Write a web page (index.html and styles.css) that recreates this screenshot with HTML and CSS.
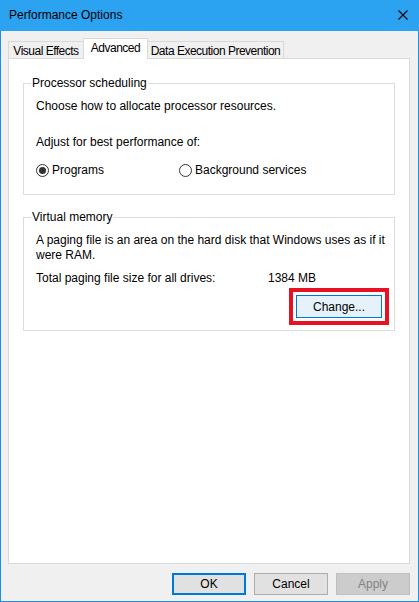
FILE: index.html
```html
<!DOCTYPE html>
<html>
<head>
<meta charset="utf-8">
<link rel="stylesheet" href="styles.css">
</head>
<body>
<div class="window">
  <div class="titlebar">
    <span class="title">Performance Options</span>
    <svg class="close" width="10" height="10" viewBox="0 0 10 10"><path d="M0.5 0.5 L9.5 9.5 M9.5 0.5 L0.5 9.5" stroke="#000" stroke-width="1.1" fill="none"/></svg>
  </div>
  <div class="client">
    <div class="tabs">
      <div class="tab tab-ve">Visual Effects</div>
      <div class="tab active">Advanced</div>
      <div class="tab tab-dep">Data Execution Prevention</div>
    </div>
    <div class="panel">
      <fieldset class="group group-proc">
        <legend>Processor scheduling</legend>
        <div class="line">Choose how to allocate processor resources.</div>
        <div class="line adjust">Adjust for best performance of:</div>
        <div class="radios">
          <label class="radio r1"><span class="dot checked"></span>Programs</label>
          <label class="radio"><span class="dot"></span>Background services</label>
        </div>
      </fieldset>
      <fieldset class="group group-vm">
        <legend>Virtual memory</legend>
        <div class="line">A paging file is an area on the hard disk that Windows uses as if it<br>were RAM.</div>
        <div class="total"><span class="total-label">Total paging file size for all drives:</span><span>1384 MB</span></div>
        <div class="change-row"><button class="btn change">Change...</button></div>
      </fieldset>
    </div>
    <div class="buttons">
      <button class="btn default">OK</button>
      <button class="btn">Cancel</button>
      <button class="btn disabled">Apply</button>
    </div>
  </div>
</div>
</body>
</html>
```

FILE: styles.css
```css
* { box-sizing: border-box; }
html, body { margin: 0; padding: 0; }
body {
  width: 419px;
  height: 602px;
  font-family: "Liberation Sans", Arial, sans-serif;
  font-size: 12px;
  line-height: 15px;
  color: #000;
  background: #f0f0f0;
  white-space: nowrap;
}
.window {
  width: 419px;
  height: 602px;
  display: flex;
  flex-direction: column;
}
.titlebar {
  height: 31px;
  background: #2ba3f1;
  display: flex;
  align-items: center;
  justify-content: space-between;
  padding: 0 11px 1px 9px;
  flex: none;
}
.title { font-size: 12px; }
.close { display: block; }
.client {
  flex: 1;
  border: 1px solid #1b8fe6;
  border-top: none;
  background: #f0f0f0;
  padding: 7px 8px 0 7px;
  display: flex;
  flex-direction: column;
}
.tabs {
  display: flex;
  align-items: flex-end;
  height: 20px;
  position: relative;
  z-index: 1;
}
.tab {
  height: 17px;
  border: 1px solid #d9d9d9;
  border-bottom: none;
  background: #f0f0f0;
  padding: 1px 0 0 0;
  line-height: 16px;
  text-align: center;
  letter-spacing: -0.5px;
}
.tab-ve { width: 76px; }
.tab.active {
  height: 21px;
  margin-bottom: -1px;
  background: #fff;
  width: 65px;
  margin-left: -1px;
  margin-right: -1px;
}
.tab-dep { width: 137px; }
.panel {
  width: 402px;
  height: 506px;
  background: #fff;
  border: 1px solid #d9d9d9;
  padding: 17px 14px 0 14px;
}
.group {
  margin: 0;
  border: 1px solid #dcdcdc;
  padding: 0 12px;
  min-width: 0;
}
.group legend {
  padding: 0 1px;
  margin-left: -5px;
  line-height: 15px;
}
.group-proc { padding-top: 8px; padding-bottom: 16px; }
.group-vm { margin-top: 15px; padding-top: 8px; padding-bottom: 12px; }
.line { line-height: 15px; }
.adjust { margin-top: 21px; }
.radios { display: flex; margin-top: 13px; align-items: center; }
.radio { display: flex; align-items: center; }
.r1 { width: 143px; }
.dot {
  width: 13px;
  height: 13px;
  border: 1px solid #333;
  border-radius: 50%;
  margin-right: 3px;
  position: relative;
  background: #fff;
}
.dot.checked::after {
  content: "";
  position: absolute;
  left: 2px; top: 2px;
  width: 7px; height: 7px;
  border-radius: 50%;
  background: #333;
}
.total { display: flex; margin-top: 8px; }
.total-label { width: 232px; }
.change-row { display: flex; justify-content: flex-end; margin-top: 9px; }
.btn {
  font-family: inherit;
  font-size: 12px;
  width: 74px;
  height: 22px;
  border: 1px solid #adadad;
  background: #e1e1e1;
  color: #000;
  padding: 0;
  margin: 0;
}
.change {
  width: 86px;
  height: 23px;
  background: #e5f1fb;
  border-color: #0078d7;
  outline: 4px solid #e81123;
  outline-offset: 3px;
}
.buttons {
  display: flex;
  justify-content: flex-end;
  gap: 8px;
  margin-top: 9px;
}
.btn.default { border: 2px solid #0078d7; }
.btn.disabled { background: #cccccc; border-color: #bfbfbf; color: #838383; }
```
